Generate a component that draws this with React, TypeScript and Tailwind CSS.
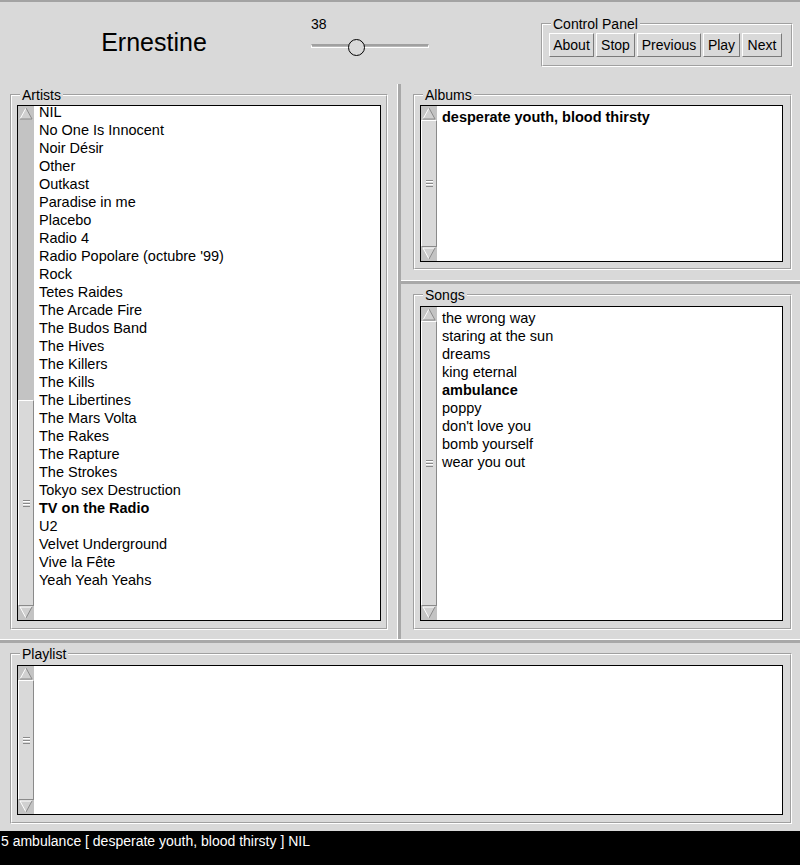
import React from "react";

const artists = [
  "NIL",
  "No One Is Innocent",
  "Noir Désir",
  "Other",
  "Outkast",
  "Paradise in me",
  "Placebo",
  "Radio 4",
  "Radio Popolare (octubre '99)",
  "Rock",
  "Tetes Raides",
  "The Arcade Fire",
  "The Budos Band",
  "The Hives",
  "The Killers",
  "The Kills",
  "The Libertines",
  "The Mars Volta",
  "The Rakes",
  "The Rapture",
  "The Strokes",
  "Tokyo sex Destruction",
  "TV on the Radio",
  "U2",
  "Velvet Underground",
  "Vive la Fête",
  "Yeah Yeah Yeahs",
];

const songs = [
  "the wrong way",
  "staring at the sun",
  "dreams",
  "king eternal",
  "ambulance",
  "poppy",
  "don't love you",
  "bomb yourself",
  "wear you out",
];

const buttons = [
  { label: "About", w: "w-[45px]" },
  { label: "Stop", w: "w-[39px]" },
  { label: "Previous", w: "w-[64px]" },
  { label: "Play", w: "w-[37px]" },
  { label: "Next", w: "w-[40px]" },
];

function LabelFrame({
  label,
  className = "",
  bodyClass = "",
  children,
}: {
  label: string;
  className?: string;
  bodyClass?: string;
  children?: React.ReactNode;
}) {
  // groove border: dark outside top-left, light outside bottom-right
  return (
    <div
      className={`relative border border-t-[#a0a0a0] border-l-[#a0a0a0] border-b-white border-r-white ${className}`}
    >
      <div
        className={`h-full border border-t-white border-l-white border-b-[#a0a0a0] border-r-[#a0a0a0] ${bodyClass}`}
      >
        {children}
      </div>
      <span className="absolute left-[9px] top-[-8px] bg-[#d9d9d9] px-[2px] text-[14px] leading-[16px]">
        {label}
      </span>
    </div>
  );
}

function Arrow({ up }: { up?: boolean }) {
  return (
    <svg width="16" height="14" viewBox="0 0 16 14" className="block shrink-0">
      {up ? (
        <>
          <polygon points="8,2 2,13 14,13" fill="#d0d0d0" />
          <polyline points="2,13 8,2" stroke="#ffffff" strokeWidth="1" fill="none" />
          <polyline points="8,2 14,13 2,13" stroke="#8a8a8a" strokeWidth="1" fill="none" />
        </>
      ) : (
        <>
          <polygon points="2,1 14,1 8,12" fill="#d0d0d0" />
          <polyline points="8,12 2,1 14,1" stroke="#ffffff" strokeWidth="1" fill="none" />
          <polyline points="14,1 8,12" stroke="#8a8a8a" strokeWidth="1" fill="none" />
        </>
      )}
    </svg>
  );
}

function Grip() {
  return (
    <svg width="7" height="7" viewBox="0 0 7 7" className="block">
      <line x1="0" y1="0.5" x2="7" y2="0.5" stroke="#8a8a8a" />
      <line x1="0" y1="1.5" x2="7" y2="1.5" stroke="#ffffff" />
      <line x1="0" y1="3.5" x2="7" y2="3.5" stroke="#8a8a8a" />
      <line x1="0" y1="4.5" x2="7" y2="4.5" stroke="#ffffff" />
      <line x1="0" y1="6.5" x2="7" y2="6.5" stroke="#8a8a8a" />
    </svg>
  );
}

function Scrollbar({ partial }: { partial?: boolean }) {
  return (
    <div className="flex w-[16px] shrink-0 flex-col bg-[#c3c3c3]">
      <Arrow up />
      <div className="flex flex-1 flex-col">
        {partial && <div className="flex-1" />}
        <div
          className={`flex items-center justify-center border border-t-white border-l-white border-b-[#8a8a8a] border-r-[#8a8a8a] bg-[#d9d9d9] ${
            partial ? "h-[206px]" : "flex-1"
          }`}
        >
          <Grip />
        </div>
      </div>
      <Arrow />
    </div>
  );
}

function ListBox({
  items,
  bold,
  partial,
  listClass = "pt-[2px]",
  className = "",
}: {
  items: string[];
  bold?: string;
  partial?: boolean;
  listClass?: string;
  className?: string;
}) {
  return (
    <div className={`flex h-full border border-black bg-white ${className}`}>
      <Scrollbar partial={partial} />
      <div className="flex-1 overflow-hidden pl-[5px]">
        <div className={listClass}>
          {items.map((it) => (
            <div
              key={it}
              className={`h-[18px] whitespace-nowrap text-[14.5px] leading-[18px] text-black ${
                it === bold ? "font-bold" : ""
              }`}
            >
              {it}
            </div>
          ))}
        </div>
      </div>
    </div>
  );
}

function VSash() {
  return <div className="w-[4px] shrink-0 border-l border-l-white bg-[#a8a8a8]" />;
}

function HSash() {
  return <div className="h-[4px] shrink-0 border-t border-t-white bg-[#a8a8a8]" />;
}

export default function App() {
  return (
    <div
      className="flex h-[865px] w-[800px] flex-col overflow-hidden bg-[#d9d9d9] text-black"
      style={{ fontFamily: '"Liberation Sans", Arial, sans-serif' }}
    >
      {/* header */}
      <div className="flex h-[84px] shrink-0 border-t-2 border-t-[#a3a3a3]">
        <div className="flex w-[308px] items-center justify-center text-[25px]">Ernestine</div>

        <div className="w-[233px] pl-[3px] pt-[14px]">
          <div className="text-[14px] leading-[16px]">38</div>
          <div className="relative mt-[7px] h-[18px] w-[118px]">
            <div className="absolute left-0 right-0 top-[5px] h-[4px] border-t-2 border-t-[#a0a0a0] border-b border-b-white border-l border-l-white border-r border-r-white bg-[#b8b8b8]" />
            <div className="absolute left-[37px] top-0 h-[17px] w-[17px] rounded-full border border-black bg-[#d9d9d9]" />
          </div>
        </div>

        <div className="pt-[21px]">
          <LabelFrame label="Control Panel" className="h-[44px] w-[252px]" bodyClass="flex gap-[2px] pl-[6px] pt-[8px]">
            {buttons.map((b) => (
              <div
                key={b.label}
                className={`flex h-[24px] items-center justify-center border border-t-white border-l-white border-b-[#7a7a7a] border-r-[#7a7a7a] text-[14px] ${b.w}`}
              >
                {b.label}
              </div>
            ))}
          </LabelFrame>
        </div>
      </div>

      {/* top panes */}
      <div className="flex h-[555px] shrink-0">
        <div className="w-[397px] shrink-0 pb-[9px] pl-[10px] pr-[9px] pt-[10px]">
          <LabelFrame label="Artists" className="h-full" bodyClass="pl-[5px] pr-[5px] pt-[9px] pb-[7px]">
            <ListBox items={artists} bold="TV on the Radio" partial listClass="mt-[-3px]" />
          </LabelFrame>
        </div>
        <VSash />
        <div className="flex flex-1 flex-col">
          <div className="pl-[12px] pr-[8px] pt-[10px]">
            <LabelFrame label="Albums" className="h-[176px]" bodyClass="pl-[5px] pr-[7px] pt-[9px] pb-[6px]">
              <ListBox items={["desperate youth, blood thirsty"]} bold="desperate youth, blood thirsty" />
            </LabelFrame>
          </div>
          <div className="mt-[10px]">
            <HSash />
          </div>
          <div className="pb-[9px] pl-[12px] pr-[8px] pt-[10px]">
            <LabelFrame label="Songs" className="h-[336px]" bodyClass="pl-[5px] pr-[7px] pt-[10px] pb-[7px]">
              <ListBox items={songs} bold="ambulance" />
            </LabelFrame>
          </div>
        </div>
      </div>

      <HSash />

      {/* playlist */}
      <div className="h-[188px] shrink-0 pb-[7px] pl-[10px] pr-[8px] pt-[10px]">
        <LabelFrame label="Playlist" className="h-full" bodyClass="pl-[5px] pr-[7px] pt-[10px] pb-[7px]">
          <ListBox items={[]} />
        </LabelFrame>
      </div>

      {/* status */}
      <div className="h-[34px] shrink-0 bg-black pl-[1px] pt-[2px] text-[14px] leading-[17px] text-white">
        5 ambulance [ desperate youth, blood thirsty ] NIL
      </div>
    </div>
  );
}
